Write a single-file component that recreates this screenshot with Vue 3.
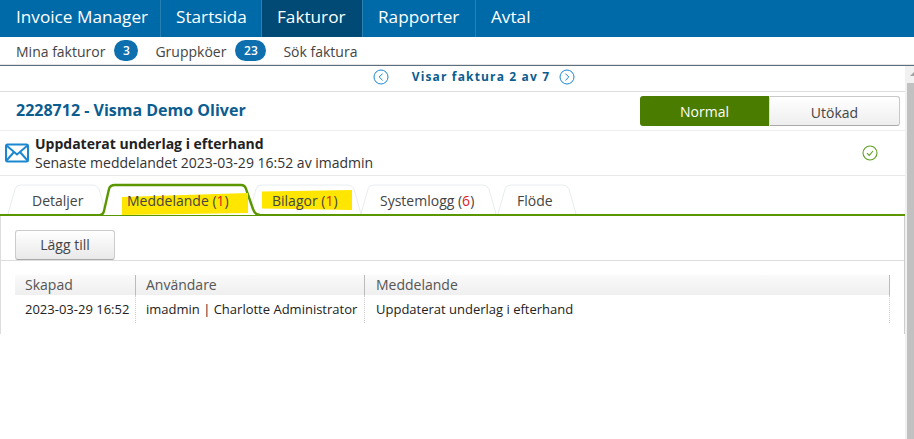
<script setup>
const navItems = [
  { label: 'Invoice Manager', width: 161 },
  { label: 'Startsida', width: 101 },
  { label: 'Fakturor', width: 101, active: true },
  { label: 'Rapporter', width: 113 },
  { label: 'Avtal', width: 80 }
];

// gap is the overlap with the previous tab, pad is where the label starts
const tabs = [
  { label: 'Detaljer', width: 100, gap: 0, pad: 25 },
  { label: 'Meddelande', count: 1, width: 160, gap: -7, pad: 27, active: true, mark: 'mark-a' },
  { label: 'Bilagor', count: 1, width: 114, gap: -12, pad: 24, mark: 'mark-b' },
  { label: 'Systemlogg', count: 6, width: 137, gap: -2, pad: 20 },
  { label: 'Flöde', width: 80, gap: 0, pad: 20 }
];
</script>

<template>
  <div class="page">
    <nav class="topnav">
      <a
        v-for="item in navItems"
        :key="item.label"
        class="topnav-item"
        :class="{ active: item.active }"
        :style="{ width: item.width + 'px' }"
      >{{ item.label }}</a>
    </nav>

    <div class="subnav">
      <span>Mina fakturor</span>
      <span class="badge">3</span>
      <span class="subnav-next">Gruppköer</span>
      <span class="badge wide">23</span>
      <span class="subnav-next">Sök faktura</span>
    </div>

    <div class="body-row">
      <main class="main">
        <div class="pager">
          <svg class="pager-icon" viewBox="0 0 16 16">
            <circle cx="8" cy="8" r="7" />
            <path d="M9.600 4.600 6.200 8l3.400 3.400" />
          </svg>
          <span class="pager-text">Visar faktura 2 av 7</span>
          <svg class="pager-icon" viewBox="0 0 16 16">
            <circle cx="8" cy="8" r="7" />
            <path d="M6.400 4.600 9.800 8l-3.400 3.400" />
          </svg>
        </div>

        <div class="title-row">
          <h1>2228712 - Visma Demo Oliver</h1>
          <div class="switch">
            <span class="switch-on">Normal</span>
            <span class="switch-off">Utökad</span>
          </div>
        </div>

        <div class="message-row">
          <svg class="mail-icon" viewBox="0 0 24 20">
            <rect x="1" y="1.500" width="22" height="17" rx="1.500" />
            <path d="M1.500 2.500 12 11.500 22.500 2.500M1.500 17.500 9 9M22.500 17.500 15 9" />
          </svg>
          <div class="message-text">
            <strong>Uppdaterat underlag i efterhand</strong>
            <span>Senaste meddelandet 2023-03-29 16:52 av imadmin</span>
          </div>
          <svg class="ok-icon" viewBox="0 0 16 16">
            <circle cx="8" cy="8" r="7" />
            <path d="M5 8.200 7.200 10.400 11 6" />
          </svg>
        </div>

        <div class="tabs">
          <div
            v-for="tab in tabs"
            :key="tab.label"
            class="tab"
            :class="{ active: tab.active }"
            :style="{ width: tab.width + 'px', marginLeft: tab.gap + 'px' }"
          >
            <svg v-if="tab.active" class="tab-shape" viewBox="0 0 160 40">
              <path d="M0 39Q3 39 4 35L9 13Q10 9 15 9H141Q145 9 146 13L153 33Q155 39 160 39" />
            </svg>
            <svg v-else class="tab-shape" :viewBox="`0 0 ${tab.width} 40`">
              <path :d="`M1 38 8 13Q9 9 14 9H${tab.width - 14}Q${tab.width - 10} 9 ${tab.width - 8} 13L${tab.width - 1} 38`" />
            </svg>
            <span v-if="tab.mark" class="mark" :class="tab.mark"></span>
            <span class="tab-label" :style="{ paddingLeft: tab.pad + 'px' }">{{ tab.label }}<template v-if="tab.count"> (<em>{{ tab.count }}</em>)</template></span>
          </div>
        </div>

        <div class="panel">
          <div class="toolbar">
            <button class="add-btn">Lägg till</button>
          </div>
          <div class="grid">
            <div class="grid-row grid-head">
              <div class="cell c1">Skapad</div>
              <div class="cell c2">Användare</div>
              <div class="cell c3">Meddelande</div>
            </div>
            <div class="grid-row grid-data">
              <div class="cell c1">2023-03-29 16:52</div>
              <div class="cell c2">imadmin | Charlotte Administrator</div>
              <div class="cell c3">Uppdaterat underlag i efterhand</div>
            </div>
          </div>
        </div>
      </main>

      <aside class="scrollbar">
        <div class="scroll-arrow"></div>
        <div class="scroll-thumb"></div>
      </aside>
    </div>
  </div>
</template>

<style scoped>
.page {
  width: 914px;
  height: 439px;
  display: flex;
  flex-direction: column;
  overflow: hidden;
  background: #fff;
  font-family: "Open Sans", sans-serif;
  color: #333;
}

.topnav {
  display: flex;
  height: 37px;
  flex: none;
  background: #0069a8;
}

.topnav-item {
  box-sizing: border-box;
  padding-left: 15px;
  border-right: 1px solid #2a7fb3;
  color: #fff;
  font-size: 17.200px;
  line-height: 34px;
}

.topnav-item:first-child {
  padding-left: 16px;
}

.topnav-item:last-child {
  border-right: 0;
}

.topnav-item.active {
  background: #004a75;
}

.subnav {
  display: flex;
  align-items: center;
  height: 29px;
  flex: none;
  box-sizing: border-box;
  padding-left: 16px;
  border-bottom: 1px solid #5b6f7e;
  box-shadow: inset 0 -1px #e4e4e4;
  font-size: 14px;
  color: #444;
}

.subnav-next {
  margin-left: 17px;
}

.badge {
  width: 24px;
  height: 21px;
  margin: 0 0 2px 9px;
  border-radius: 11px;
  background: #0d6fae;
  color: #fff;
  font-size: 12px;
  font-weight: 600;
  line-height: 21px;
  text-align: center;
}

.badge.wide {
  width: 31px;
}

.body-row {
  display: flex;
  flex: 1;
  min-height: 0;
}

.main {
  flex: 1;
  min-width: 0;
}

.pager {
  display: flex;
  justify-content: center;
  align-items: center;
  height: 26px;
  box-sizing: border-box;
  padding: 0 0 4px 43px;
  border-bottom: 1px solid #ddd;
}

.pager-icon {
  width: 16px;
  height: 16px;
  fill: none;
  stroke: #1b87d0;
  stroke-width: 1;
}

.pager-text {
  margin: 0 9px 0 23px;
  color: #0b5d8f;
  font-size: 12px;
  font-weight: 700;
  letter-spacing: 1.150px;
}

.title-row {
  display: flex;
  justify-content: space-between;
  align-items: center;
  height: 39px;
  box-sizing: border-box;
  padding: 0 5px 0 16px;
  border-bottom: 1px solid #eee;
}

h1 {
  margin: 0 0 2px;
  color: #0b5d8f;
  font-size: 16px;
  font-weight: 700;
}

.switch {
  display: flex;
  width: 260px;
  height: 30px;
  font-size: 14px;
  line-height: 31px;
  text-align: center;
}

.switch-on {
  flex: 1;
  border-radius: 3px 0 0 3px;
  background: #4a7c00;
  color: #fff;
}

.switch-off {
  flex: 1;
  box-sizing: border-box;
  border: 1px solid #c8c8c8;
  border-left-color: #ddd;
  border-bottom-color: #aaa;
  border-radius: 0 3px 3px 0;
  background: linear-gradient(#fff, #eee);
  color: #444;
}

.message-row {
  display: flex;
  align-items: center;
  height: 45px;
  box-sizing: border-box;
  padding: 0 27px 0 5px;
  border-bottom: 1px solid #e8e8e8;
}

.mail-icon {
  width: 24px;
  height: 20px;
  flex: none;
  fill: none;
  stroke: #1b87d0;
  stroke-width: 2;
}

.message-text {
  display: flex;
  flex-direction: column;
  flex: 1;
  margin-left: 6px;
  font-size: 14px;
  line-height: 19px;
  color: #333;
}

.message-text strong {
  color: #222;
  font-weight: 700;
}

.ok-icon {
  width: 16px;
  height: 16px;
  fill: none;
  stroke: #5f9f22;
  stroke-width: 1.100;
}

.tabs {
  display: flex;
  height: 40px;
  box-sizing: border-box;
  padding-left: 7px;
  border-bottom: 2px solid #5a9600;
}

.tab {
  position: relative;
  height: 40px;
  flex: none;
  font-size: 14px;
  color: #444;
}

.tab-shape {
  position: absolute;
  top: 0;
  left: 0;
  width: 100%;
  height: 40px;
  fill: none;
  stroke: #e8edf1;
  stroke-width: 1;
}

.tab.active {
  z-index: 1;
}

.tab.active .tab-shape {
  fill: #fff;
  stroke: #5a9600;
  stroke-width: 2.400;
}

.mark {
  position: absolute;
  background: #ffe600;
}

.mark-a {
  top: 17px;
  left: 22px;
  width: 126px;
  height: 22px;
  clip-path: polygon(0 18%, 100% 0, 100% 91%, 0 100%);
}

.mark-b {
  top: 14px;
  left: 14px;
  width: 90px;
  height: 20px;
  clip-path: polygon(0 8%, 100% 0, 100% 100%, 0 92%);
}

.tab-label {
  position: relative;
  display: block;
  padding-top: 15px;
  line-height: 19px;
  white-space: nowrap;
}

.tab-label em {
  color: #e02020;
  font-style: normal;
}

.panel {
  box-sizing: border-box;
  height: 118px;
  border-left: 1px solid #ddd;
  border-right: 1px solid #ccc;
}

.toolbar {
  height: 45px;
  box-sizing: border-box;
  padding: 14px 0 0 14px;
  border-bottom: 1px solid #ddd;
}

.add-btn {
  display: block;
  width: 100px;
  height: 30px;
  padding: 0 0 2px;
  border: 1px solid #ccc;
  border-bottom-color: #aaa;
  border-radius: 3px;
  background: linear-gradient(#fff, #e9e9e9);
  color: #444;
  font-family: inherit;
  font-size: 14px;
}

.grid {
  margin: 14px 14px 0 14px;
}

.grid-row {
  display: flex;
}

.grid-head {
  height: 20px;
  background: linear-gradient(#fafafa, #efefef);
  color: #555;
  font-size: 14px;
  line-height: 20px;
}

.grid-data {
  height: 28px;
  color: #222;
  font-size: 13px;
  line-height: 29px;
}

.cell {
  box-sizing: border-box;
  padding-left: 10px;
  white-space: nowrap;
}

.c1 {
  width: 120px;
}

.c2 {
  width: 229px;
}

.c3 {
  flex: 1;
  padding-left: 11px;
}

.grid-head .c2,
.grid-head .c3 {
  border-left: 1px solid #bbb;
}

.grid-head .c3 {
  border-right: 1px solid #bbb;
}

.grid-data .c2,
.grid-data .c3 {
  border-left: 1px dotted #ccc;
}

.grid-data .c3 {
  border-right: 1px dotted #ccc;
}

.scrollbar {
  width: 9px;
  flex: none;
  overflow: hidden;
  background: #f1f1f1;
}

.scroll-arrow {
  width: 0;
  height: 0;
  margin: 6px 0 7px 5px;
  border-left: 4px solid transparent;
  border-right: 4px solid transparent;
  border-bottom: 4px solid #a3a3a3;
}

.scroll-thumb {
  height: 100%;
  margin-left: 2px;
  background: #c1c1c1;
}
</style>
